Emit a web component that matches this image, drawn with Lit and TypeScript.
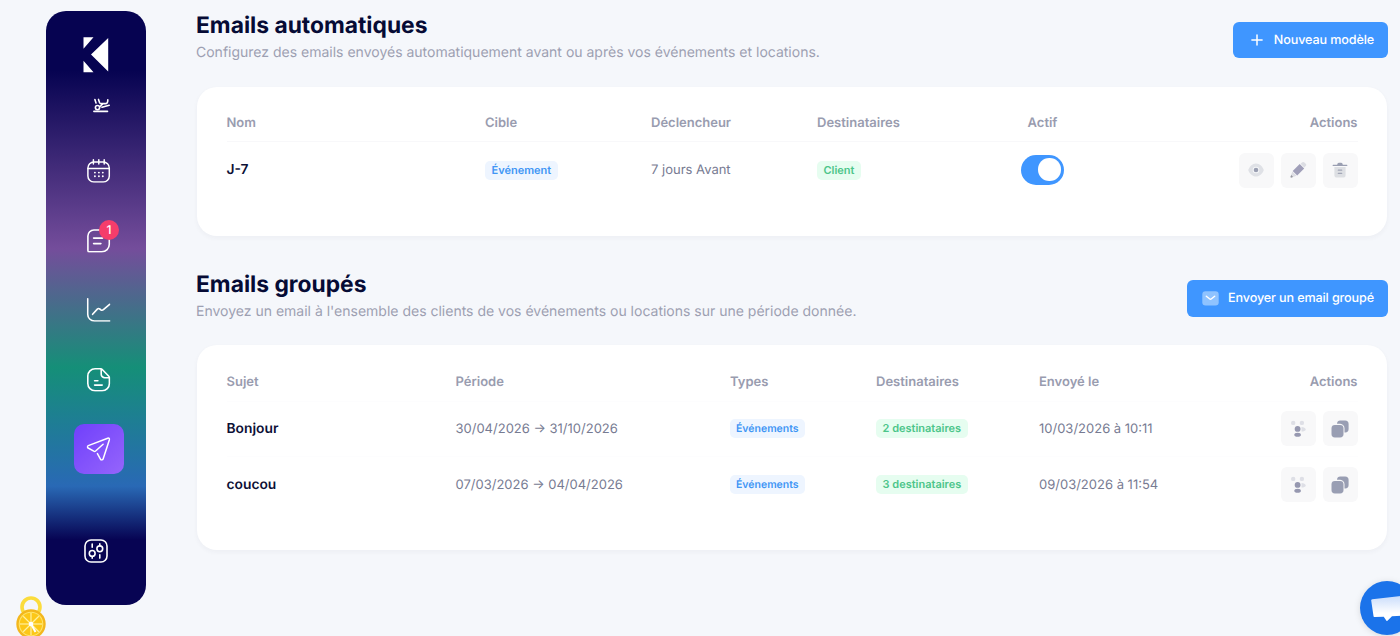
import { LitElement, html, svg, css } from "lit";
import { customElement } from "lit/decorators.js";

const icons = {
  logo: html`<svg width="26" height="36" viewBox="0 0 26 36" fill="#fff"><path d="M.5.3h10L.5 11.8zM8 17.6 25.2.9v33.6zM.5 23.7l10 11.5H.5z"/></svg>`,
  flight: html`<svg width="18" height="15" viewBox="0 0 18 15" fill="none" stroke="#fff" stroke-width="1.6" stroke-linecap="round" stroke-linejoin="round"><path d="M1.400 13.4h13.6M2.400 1.500l1.100 3.400M6 1.400l1 3.100c.3.800.9 1.100 1.700 1.100h4.200c1.600 0 2.500-1.100 2.400-3.800M9.500 9.300l7.200-2.100M7.300 8.800l2.900-2.900"/><circle cx="5" cy="9.600" r="2.100"/></svg>`,
  calendar: html`<svg width="24" height="24" viewBox="0 0 24 24" fill="none" stroke="#fff" stroke-width="1.500" stroke-linecap="round"><rect x="1.3" y="3.2" width="21.4" height="20" rx="6"/><path d="M1.4 9.6h21.2M6.8 1v4.2M12.2 1v4.2M17.6 1v4.2"/><path stroke-width="1.900" d="M8.3 13.8h.01M12.3 13.8h.01M16.2 13.8h.01M8.3 17.4h.01M12.3 17.4h.01M16.2 17.4h.01"/></svg>`,
  message: html`<svg width="24" height="24" viewBox="0 0 24 24" fill="none" stroke="#fff" stroke-width="1.6" stroke-linecap="round" stroke-linejoin="round"><path d="M7.3 1.2h9.4a6 6 0 0 1 6 6v8.3a7.5 7.5 0 0 1-7.5 7.5H2.7A1.4 1.4 0 0 1 1.3 21.600V7.2a6 6 0 0 1 6-6zM7 9.300h9M7 14.800h7.300"/></svg>`,
  chart: html`<svg width="24" height="24" viewBox="0 0 24 24" fill="none" stroke="#fff" stroke-width="1.6" stroke-linecap="round" stroke-linejoin="round"><path d="M1.1 1v15.500a6.700 6.700 0 0 0 6.700 6.700h15.400M6 16.500l4.700-5.200c.8-.8 1.600-.8 2.500-.1l1 .8c.9.700 1.800.6 2.600-.1L23 6.500"/></svg>`,
  file: html`<svg width="24" height="24" viewBox="0 0 24 24" fill="none" stroke="#fff" stroke-width="1.600" stroke-linecap="round" stroke-linejoin="round"><path d="M14.300 1H8.500A7.300 7.300 0 0 0 1.200 8.300v7.400A7.300 7.300 0 0 0 8.500 23h7a7.300 7.300 0 0 0 7.300-7.300V9.900c0-.6-.2-1.100-.6-1.500l-6.800-6.900c-.300-.3-.7-.5-1.100-.5zM14.600 1.200v5.200a3.500 3.500 0 0 0 3.500 3.500h4.600M8 13h3.300M8 17.300h7.600"/></svg>`,
  send: html`<svg width="24" height="24" viewBox="0 0 24 24" fill="none" stroke="#fff" stroke-width="1.5" stroke-linecap="round" stroke-linejoin="round"><path d="M16.500 7.500 9 14.200c-.6.5-1.200.5-1.800.2L1.500 11.200c-1.100-.6-1-2 .2-2.400L21.100 1.400c1.200-.4 2 .4 1.700 1.600l-6.300 19.300c-.4 1.200-1.900 1.400-2.500.2l-3.200-5.700"/></svg>`,
  sliders: html`<svg width="24" height="24" viewBox="0 0 24 24" fill="none" stroke="#fff" stroke-width="1.600" stroke-linecap="round"><rect x="1" y="1" width="22" height="22" rx="6"/><circle cx="8.200" cy="14.400" r="2.900"/><circle cx="15.800" cy="9.800" r="2.900"/><path d="M8.200 5v3.200M8.200 17.500v1.700M15.800 4.900v1.700M15.800 15.800v3.300"/></svg>`,
  plus: html`<svg width="12" height="12" viewBox="0 0 12 12" stroke="#fff" stroke-width="1.500" stroke-linecap="round"><path d="M6 .9v10.200M.9 6h10.200"/></svg>`,
  mail: html`<svg width="17" height="15" viewBox="0 0 17 15"><rect x=".3" y=".3" width="16.400" height="14.200" rx="3.200" fill="#8fc3ff"/><path d="m4.300 5.200 3.200 2.600c.6.500 1.400.5 2 0l3.200-2.600" fill="none" stroke="#fff" stroke-width="1.400" stroke-linecap="round"/></svg>`,
  eye: html`<svg width="18" height="18" viewBox="0 0 18 18"><path d="M1.200 9C2.200 5.800 5.400 2.400 9 2.400S15.800 5.800 16.800 9C15.800 12.200 12.600 15.600 9 15.600S2.200 12.200 1.200 9z" fill="#dfe1e6"/><circle cx="9" cy="9" r="3.300" fill="#f5f6f8"/><circle cx="9" cy="9" r="2.300" fill="#9a9fb2"/></svg>`,
  pencil: html`<svg width="18" height="18" viewBox="0 0 18 18"><path d="M11.600 2.800 13 1.400c.7-.7 1.700-.7 2.400 0l1.300 1.300c.7.700.7 1.700 0 2.400l-1.400 1.400z" fill="#dcdde3"/><path d="m10.700 2.900 4.500 4.500-7 7-4.500-4.500z" fill="#a09fb9"/><path d="m3.300 10.500 4.300 4.300-5 1.800c-.8.200-1.300-.3-1-1.100z" fill="#dcdde3"/><path d="m2.200 14 1.900 1.900-1.600.7c-.7.200-1.200-.3-.9-1z" fill="#96979f"/></svg>`,
  trash: html`<svg width="18" height="18" viewBox="0 0 18 18"><path d="M3.400 6h11.200v7.900a2.700 2.700 0 0 1-2.700 2.700H6.100a2.700 2.700 0 0 1-2.700-2.700z" fill="#dddfe3"/><path d="M2.200 3.700h4c.2-1.300.7-2 1.700-2h2.200c1 0 1.500.7 1.700 2h4c.9 0 .9 1.300 0 1.300H2.200c-.9 0-.9-1.300 0-1.300z" fill="#9a9fb2"/><path d="M7.300 9.200h3.400M7.300 12.400h3.400" stroke="#a3a7b7" stroke-width="1.200" stroke-linecap="round"/></svg>`,
  people: html`<svg width="18" height="18" viewBox="0 0 18 18"><g fill="#dedfe6"><circle cx="4.200" cy="2.900" r="2.200"/><circle cx="12.900" cy="2.900" r="2.200"/><path d="M12.500 7.100c2.100 0 4.200 1 4.200 2.300s-2.100 2.200-4.200 2.200z"/></g><circle cx="8.600" cy="8.900" r="2.900" fill="#9698b0"/><ellipse cx="8.600" cy="14.800" rx="3.300" ry="2" fill="#9698b0"/></svg>`,
  copy: html`<svg width="18" height="18" viewBox="0 0 18 18" fill="#999eb3"><path d="M6 3.700A3.400 3.400 0 0 1 9.300.6h4.800a3.500 3.500 0 0 1 3.500 3.500V9a3.400 3.400 0 0 1-3.400 3.400h-.700V8.300c0-2.500-1.700-4.400-4.300-4.600z"/><rect x=".5" y="5" width="12" height="12.400" rx="3.400"/></svg>`,
};

interface Mail { subject: string; period: string; count: string; sent: string }

const mails: Mail[] = [
  { subject: "Bonjour", period: "30/04/2026 → 31/10/2026", count: "2 destinataires", sent: "10/03/2026 à 10:11" },
  { subject: "coucou", period: "07/03/2026 → 04/04/2026", count: "3 destinataires", sent: "09/03/2026 à 11:54" },
];

@customElement("side-nav")
export class SideNav extends LitElement {
  static styles = css`
    :host { display: flex; flex-direction: column; align-items: flex-start; box-sizing: border-box;
      width: 100px; height: 594px; border-radius: 20px; padding: 25.500px 0 0 27.500px;
      background: linear-gradient(180deg, #060351 0%, #060351 10%, #744d9b 40%, #158f78 60%, #2969b5 80%, #070453 89%, #070453 100%); }
    svg { display: block; }
    .logo { margin-left: 9.500px; height: 36px; }
    .flight { margin: 25.500px 0 0 19.500px; height: 15px; transform: translateX(-.5px); }
    nav { display: flex; flex-direction: column; gap: 19.600px; margin-top: 33px; }
    .item { width: 50px; height: 50px; border-radius: 10px; display: flex; align-items: center; justify-content: center; position: relative; }
    .item svg { transform: translate(-.4px, -.2px); }
    .active { background: linear-gradient(135deg, #7040fb, #9565fb); }
    .badge { position: absolute; left: 25.500px; top: 4.500px; width: 20px; height: 20px; border-radius: 50%; background: #f53d6b;
      color: #fff; font: 500 12px/20px Inter, sans-serif; text-align: center; }
    .settings { margin: 65px 0 0 10px; }
  `;
  render() {
    return html`
      <div class="logo">${icons.logo}</div>
      <div class="flight">${icons.flight}</div>
      <nav>
        <div class="item">${icons.calendar}</div>
        <div class="item">${icons.message}<span class="badge">1</span></div>
        <div class="item">${icons.chart}</div>
        <div class="item">${icons.file}</div>
        <div class="item active">${icons.send}</div>
      </nav>
      <div class="settings">${icons.sliders}</div>`;
  }
}

@customElement("app-root")
export class AppRoot extends LitElement {
  static styles = css`
    :host { display: flex; position: relative; box-sizing: border-box; width: 1400px; height: 636px; overflow: hidden;
      padding: 11px 12px 0 46px; background: #f5f7fb; font-family: Inter, sans-serif; color: #060b35; text-rendering: geometricPrecision; }
    svg { display: block; }
    main { flex: 1; margin-left: 50px; }
    .head { display: flex; justify-content: space-between; align-items: flex-start; height: 75.500px; }
    .second { margin-top: 33.500px; }
    h2 { margin: 0; padding-top: 1px; font-size: 22.800px; line-height: 28px; font-weight: 700; }
    .sub { margin: 2.500px 0 0; font-size: 14px; line-height: 20px; color: #9da0b2; }
    .second .sub { margin-top: 3px; }
    .btn { display: flex; align-items: center; box-sizing: border-box; height: 36px; margin-top: 11px; padding: 0 14px 0 18px; gap: 11px;
      border-radius: 6px; background: #3f96ff; color: #fff; font-size: 12.600px; letter-spacing: -.120px; font-weight: 500; white-space: nowrap; }
    .btn.group { gap: 9px; padding: 1px 14px 0 15px; margin-top: 10.500px; height: 36.500px; }
    .card { box-sizing: border-box; margin: 0 1px; padding: 18px 29.500px 0; border-radius: 20px; background: #fff; box-shadow: 0 2px 5px rgba(40, 50, 80, .045); }
    .auto { height: 149.500px; }
    .bulk { height: 205px; padding-top: 18.500px; }
    .row { display: grid; align-items: center; height: 57px; font-size: 13px; color: #777b92; border-bottom: 1px solid #fdfdfe; box-sizing: border-box; }
    .row:last-child { border: 0; }
    .auto .row { grid-template-columns: 258.500px 166px 166px 150px 151px 1fr; }
    .bulk .row { grid-template-columns: 229px 274.500px 146px 163px 1fr auto; height: 55.500px; }
    .auto .row.th { height: 37px; }
    .row.th { font-weight: 600; color: #999caf; border-bottom-color: #f8f8fa; }
    .bulk .row.th { height: 38px; border-bottom-color: #fdfdfe; padding-bottom: 1px; }
    .name { color: #0c1036; font-weight: 600; font-size: 13.800px; }
    .auto .name { margin-top: -1px; }
    .center { justify-self: center; }
    .end { justify-self: end; }
    .tag { justify-self: start; padding: 0 6.500px; height: 19px; border-radius: 5px; font-size: 11px; line-height: 19px; font-weight: 600; }
    .blue { color: #4196f5; background: #eef5ff; }
    .bulk .blue { font-size: 10.500px; padding: 0 6px; }
    .green { color: #4cc58a; background: #e6fdf0; }
    .toggle { display: flex; justify-content: flex-end; align-items: center; box-sizing: border-box; width: 43px; height: 30px; margin-top: -1px; border-radius: 15px; padding-right: 3.500px; background: #3f96ff; }
    .knob { width: 22.500px; height: 22.500px; border-radius: 50%; background: #fff; }
    .actions { display: flex; gap: 7px; justify-self: end; }
    .act { display: flex; align-items: center; justify-content: center; width: 35px; height: 35px; border-radius: 6px; background: #f8f8f9; }
    .lemon { position: absolute; left: 15px; top: 595px; }
    .chat { position: absolute; left: 1359px; top: 580px; filter: drop-shadow(0 1px 3px rgba(0, 0, 0, .12)); }
  `;
  render() {
    const wedges = [0, 45, 90, 135, 180, 225, 270, 315];
    return html`
      <side-nav></side-nav>
      <main>
        <div class="head">
          <div><h2>Emails automatiques</h2><p class="sub">Configurez des emails envoyés automatiquement avant ou après vos événements et locations.</p></div>
          <div class="btn">${icons.plus}<span>Nouveau modèle</span></div>
        </div>
        <section class="card auto">
          <div class="row th"><span>Nom</span><span>Cible</span><span>Déclencheur</span><span>Destinataires</span><span class="center">Actif</span><span class="end">Actions</span></div>
          <div class="row">
            <span class="name">J-7</span><span class="tag blue">Événement</span><span>7 jours Avant</span><span class="tag green">Client</span>
            <div class="toggle center"><div class="knob"></div></div>
            <div class="actions"><div class="act">${icons.eye}</div><div class="act">${icons.pencil}</div><div class="act">${icons.trash}</div></div>
          </div>
        </section>
        <div class="head second">
          <div><h2>Emails groupés</h2><p class="sub">Envoyez un email à l'ensemble des clients de vos événements ou locations sur une période donnée.</p></div>
          <div class="btn group">${icons.mail}<span>Envoyer un email groupé</span></div>
        </div>
        <section class="card bulk">
          <div class="row th"><span>Sujet</span><span>Période</span><span>Types</span><span>Destinataires</span><span>Envoyé le</span><span class="end">Actions</span></div>
          ${mails.map((m) => html`<div class="row">
            <span class="name">${m.subject}</span><span>${m.period}</span><span class="tag blue">Événements</span><span class="tag green">${m.count}</span><span>${m.sent}</span>
            <div class="actions"><div class="act">${icons.people}</div><div class="act">${icons.copy}</div></div>
          </div>`)}
        </section>
      </main>
      <svg class="lemon" width="32" height="41" viewBox="0 0 32 41">
        <circle cx="16" cy="12" r="9" fill="none" stroke="#fbdc3c" stroke-width="3.600"/>
        <circle cx="16" cy="29" r="14.700" fill="#f3b71d"/><circle cx="16" cy="29" r="12.300" fill="#ffe56b"/><circle cx="16" cy="29" r="11.200" fill="#fcc718"/>
        ${wedges.map((a) => svg`<path d="M16 29V18" stroke="#fff0a0" stroke-width="1.200" transform="rotate(${a} 16 29)"/>`)}
        <circle cx="16" cy="29" r="2.300" fill="#fff"/><path d="m16 29 4.500 8" stroke="#fff" stroke-width="2"/>
      </svg>
      <svg class="chat" width="56" height="56" viewBox="0 0 56 56">
        <defs><linearGradient id="g" x1="0" y1="0" x2="0" y2="1"><stop offset="0" stop-color="#c9dcfb"/><stop offset=".7" stop-color="#fff"/></linearGradient></defs>
        <circle cx="28" cy="28" r="27" fill="#1b73ea"/>
        <path d="M13.300 19.200 44 15.800c.8 0 1.300.4 1.300 1.200L44 34.500c0 .8-.6 1.300-1.400 1.300l-9.600.5-4.300 4.300c-.5.500-1 .4-1.400-.2l-2.600-3.600-8.800.3c-.8 0-1.300-.4-1.400-1.200l-2.300-15.300c-.1-.8.3-1.300 1.100-1.400z" fill="url(#g)"/>
      </svg>`;
  }
}
